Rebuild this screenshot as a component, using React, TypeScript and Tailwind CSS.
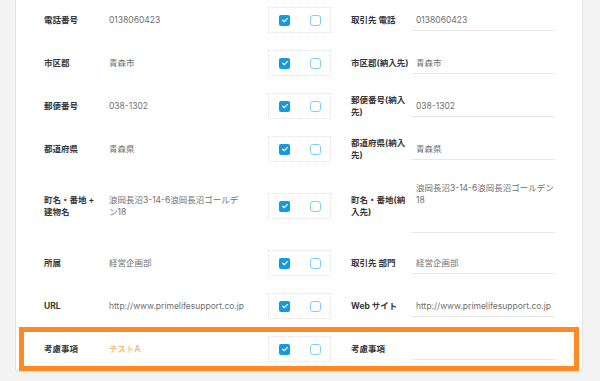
import React from "react";

type Row = {
  label: string;
  value: string;
  rLabel: string;
  rValue: string;
  tall?: boolean;
  highlight?: boolean;
  orange?: boolean;
};

const rows: Row[] = [
  { label: "電話番号", value: "0138060423", rLabel: "取引先 電話", rValue: "0138060423" },
  { label: "市区郡", value: "青森市", rLabel: "市区郡(納入先)", rValue: "青森市" },
  { label: "郵便番号", value: "038-1302", rLabel: "郵便番号(納入先)", rValue: "038-1302" },
  { label: "都道府県", value: "青森県", rLabel: "都道府県(納入先)", rValue: "青森県" },
  {
    label: "町名・番地 + 建物名",
    value: "浪岡長沼3-14-6浪岡長沼ゴールデン18",
    rLabel: "町名・番地(納入先)",
    rValue: "浪岡長沼3-14-6浪岡長沼ゴールデン18",
    tall: true,
  },
  { label: "所属", value: "経営企画部", rLabel: "取引先 部門", rValue: "経営企画部" },
  {
    label: "URL",
    value: "http://www.primelifesupport.co.jp",
    rLabel: "Web サイト",
    rValue: "http://www.primelifesupport.co.jp",
  },
  { label: "考慮事項", value: "テストA", rLabel: "考慮事項", rValue: "", highlight: true, orange: true },
];

function Checked() {
  return (
    <span className="flex h-[11px] w-[11px] items-center justify-center rounded-[2px] bg-[#169ade]">
      <svg viewBox="0 0 10 10" className="h-[8px] w-[8px]">
        <path
          d="M2.2 5.3 L4.2 7.1 L7.9 3.2"
          fill="none"
          stroke="white"
          strokeWidth="1.5"
          strokeLinecap="round"
          strokeLinejoin="round"
        />
      </svg>
    </span>
  );
}

function Unchecked() {
  return <span className="block h-[11px] w-[11px] rounded-[3px] border border-[#86cdef] bg-white" />;
}

function FormRow({ r }: { r: Row }) {
  return (
    <div className={`relative flex items-center ${r.tall ? "h-[54px]" : "h-[26px]"}`}>
      <div className="w-[60px] font-bold text-[#383838]">{r.label}</div>
      <div className={`ml-[5px] w-[136px] ${r.orange ? "text-[#f7a654]" : "text-[#707070]"}`}>{r.value}</div>
      <div className="ml-[23px] flex h-[26px] w-[63px] items-center gap-[20px] border border-dotted border-[#e0e0e0] pl-[10px]">
        <Checked />
        <Unchecked />
      </div>
      <div className="ml-[20px] w-[61px] font-bold text-[#383838]">{r.rLabel}</div>
      {r.tall ? (
        <div className="h-full w-[143px] border-b border-[#e8e8e8] pl-[4px] pt-[3px] text-[#707070]">{r.rValue}</div>
      ) : (
        <div className="flex h-[22px] w-[143px] items-center border-b border-[#e8e8e8] pl-[4px] text-[#707070]">
          {r.rValue}
        </div>
      )}
      {r.highlight && (
        <div className="pointer-events-none absolute -bottom-[9px] -left-[25px] -right-[24px] -top-[9px] border-[5px] border-[#ff8a24]" />
      )}
    </div>
  );
}

export default function App() {
  return (
    <div className="min-h-[381px] w-[600px] bg-[#f3f3f3] pb-[9px] pl-[15px] pr-[17px] font-['Inter','Noto_Sans_CJK_JP',sans-serif] text-[8.5px] leading-[12px]">
      <div className="rounded-b-[4px] border border-t-0 border-[#e4e4e4] bg-white pb-[9px] pl-[28px] pr-[27px] pt-[7px]">
        <div className="flex flex-col gap-[17px]">
          {rows.map((r, i) => (
            <FormRow key={i} r={r} />
          ))}
        </div>
      </div>
    </div>
  );
}
